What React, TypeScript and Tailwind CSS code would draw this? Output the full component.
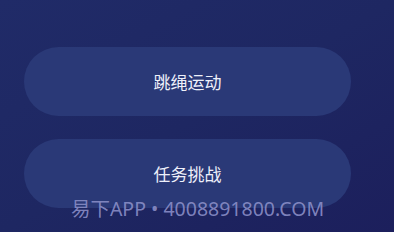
import React from "react";

export default function App() {
  return (
    <div
      className="relative w-[394px] h-[232px] overflow-hidden bg-gradient-to-br from-[#202b68] via-[#1e2762] to-[#1c1f5c]"
      style={{ fontFamily: '"Noto Sans CJK SC", "Noto Sans", sans-serif' }}
    >
      <div className="flex flex-col gap-[23px] pt-[47px] pl-[24px]">
        <div className="w-[327px] h-[69px] rounded-full bg-[#2a3977] flex items-center justify-center text-[17px] text-[#eef0fa] leading-none">
          跳绳运动
        </div>
        <div className="w-[327px] h-[69px] rounded-full bg-[#2a3977] flex items-center justify-center text-[17px] text-[#eef0fa] leading-none">
          任务挑战
        </div>
      </div>
      <div
        className="absolute left-0 right-0 top-[195px] flex justify-center pl-[1px] text-[19.5px] leading-[28px] text-[#8b8fc8]/90 whitespace-nowrap"
        style={{ fontFamily: '"Noto Sans", "Noto Sans CJK SC", sans-serif' }}
      >
        易下APP • 4008891800.COM
      </div>
    </div>
  );
}
